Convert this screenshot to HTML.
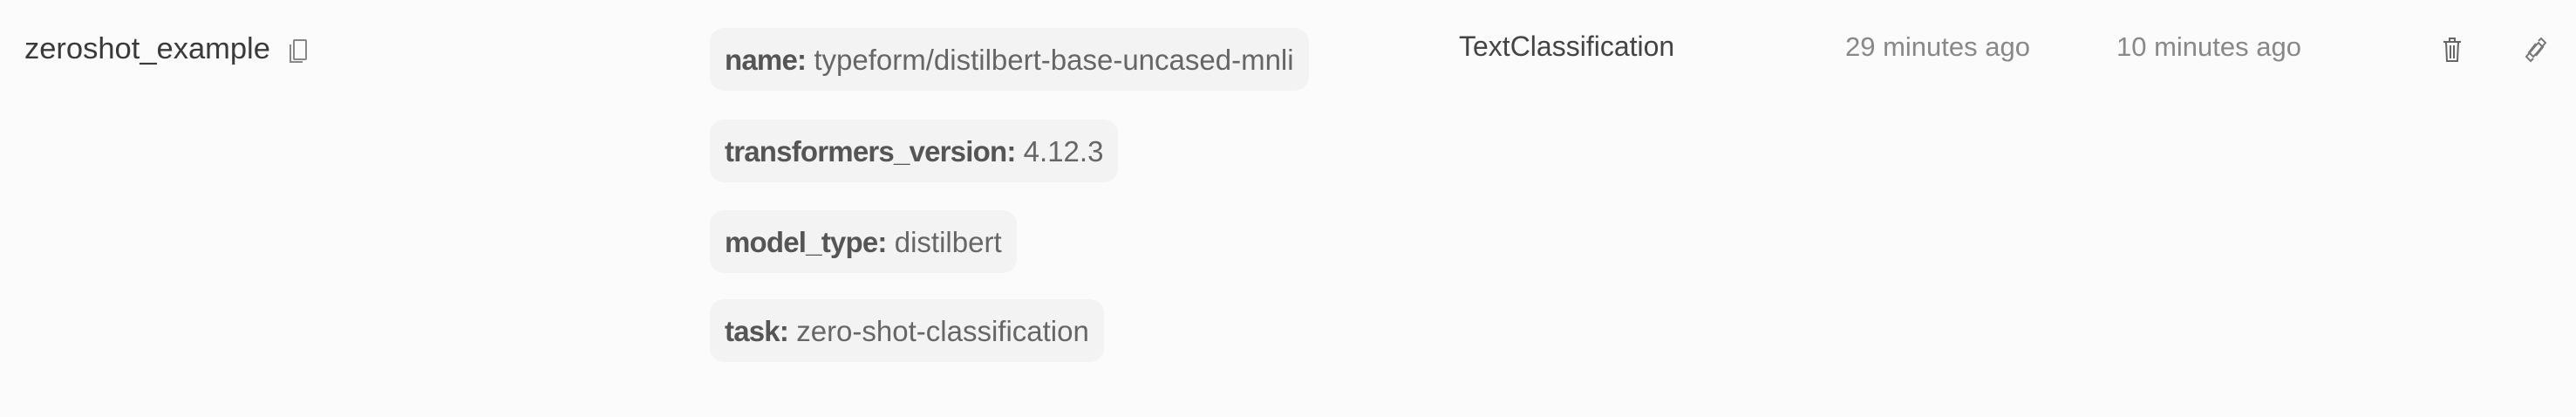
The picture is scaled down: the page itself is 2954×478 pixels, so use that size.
<!DOCTYPE html>
<html><head><style>
html,body{margin:0;padding:0;width:2954px;height:478px;background:#fbfbfb;overflow:hidden;font-family:"Liberation Sans",sans-serif;}
.a{position:absolute;white-space:nowrap;}
.name{left:28px;top:37px;font-size:34.5px;color:#3a3a3a;}
.chip{position:absolute;left:814px;height:72px;background:#f3f3f3;border-radius:16px;padding:0 17px;line-height:74px;font-size:33px;color:#666;white-space:nowrap;}
.chip b{color:#555;letter-spacing:-0.8px;}
.cls{left:1673px;top:35px;font-size:32px;color:#444;}
.d{top:36px;font-size:31px;color:#888;}
</style></head><body>
<div class="a name">zeroshot_example</div>
<svg class="a" style="left:330px;top:44px" width="24" height="30" viewBox="0 0 24 30" fill="none" stroke="#888" stroke-width="2"><rect x="7" y="2" width="14" height="22" rx="1"/><path d="M3 7v20h14"/></svg>
<div class="chip" style="top:32px"><b>name:</b> typeform/distilbert-base-uncased-mnli</div>
<div class="chip" style="top:137px"><b>transformers_version:</b> 4.12.3</div>
<div class="chip" style="top:241px"><b>model_type:</b> distilbert</div>
<div class="chip" style="top:343px"><b>task:</b> zero-shot-classification</div>
<div class="a cls">TextClassification</div>
<div class="a d" style="left:2116px">29 minutes ago</div>
<div class="a d" style="left:2427px">10 minutes ago</div>
<svg class="a" style="left:2799px;top:42px" width="26" height="30" viewBox="0 0 26 30" fill="none" stroke="#666" stroke-width="2"><path d="M3 6h20M10 6V2h6v4M6 6l1 22h12l1-22M11 10v15M15 10v15"/></svg>
<svg class="a" style="left:2894px;top:42px" width="28" height="30" viewBox="0 0 28 30" fill="none" stroke="#777" stroke-width="2"><path d="M17 5l3-3 5 5-11 13-3 3-5-5 8-10M11 25l-3 3-5-5 11-13 3-3 5 5-8 10"/></svg>
</body></html>
